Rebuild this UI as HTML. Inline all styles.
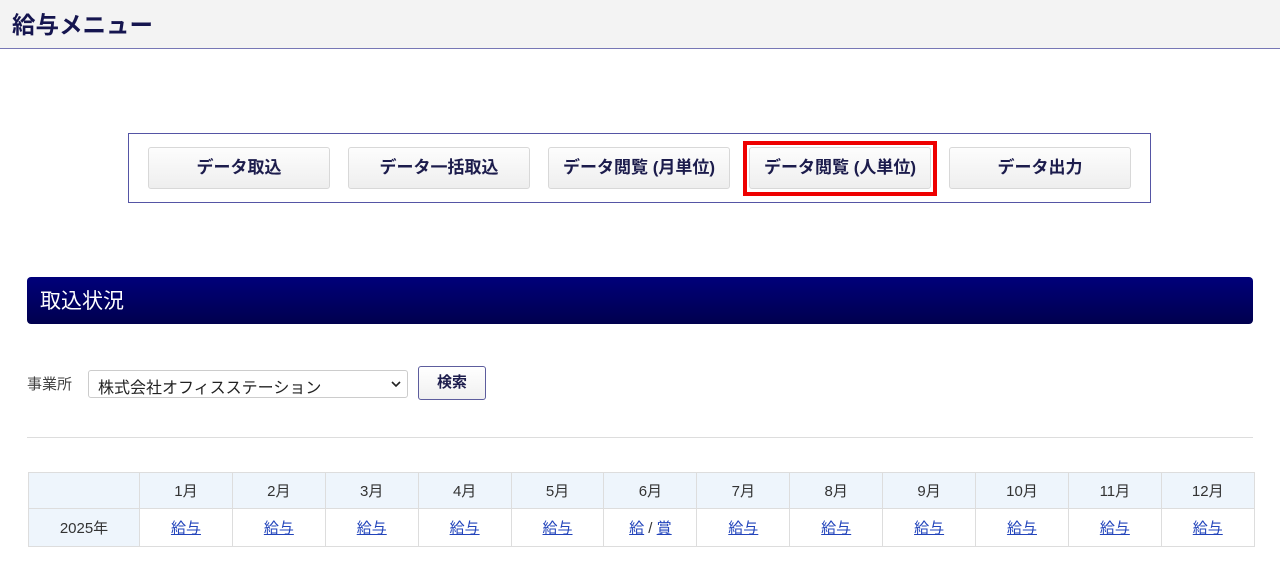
<!DOCTYPE html>
<html><head><meta charset="utf-8"><style>
*{margin:0;padding:0;box-sizing:border-box}
body{width:1280px;height:569px;background:#fff;font-family:"Liberation Sans","Noto Sans CJK JP",sans-serif;position:relative;overflow:hidden;color:#333}
.hd{position:absolute;left:0;top:0;width:1280px;height:49px;background:#f3f3f3;border-bottom:1px solid #7777b5}
.hd h1{position:absolute;left:12px;top:6px;font-size:23.5px;font-weight:bold;color:#15154f;letter-spacing:0}
.box{position:absolute;left:128px;top:133px;width:1023px;height:70px;border:1px solid #5555a5}
.btn{position:absolute;top:147px;width:182px;height:42px;border:1px solid #d8d8d8;border-radius:3px;background:linear-gradient(#fdfdfd,#eeeeee);font-size:17px;font-weight:bold;color:#1c1c4c;text-align:center;line-height:40px}
.red{position:absolute;left:743px;top:141px;width:194px;height:55px;border:4px solid #ee0000}
.ban{position:absolute;left:27px;top:277px;width:1226px;height:47px;border-radius:4px;background:linear-gradient(#00007a,#00004e);color:#fff;font-size:21px;padding:8px 0 0 13px}
.lbl{position:absolute;left:27px;top:373px;font-size:15px;color:#444}
.sel{position:absolute;left:88px;top:370px;width:320px;height:28px;border:1px solid #ccc;border-radius:3px;font-size:16px;color:#222;padding:3px 0 0 9px}
.sel svg{position:absolute;right:6px;top:9px}
.sb{position:absolute;left:418px;top:366px;width:68px;height:34px;border:1px solid #5d5d9d;border-radius:3px;background:linear-gradient(#fff,#f0f0f0);font-size:15px;font-weight:bold;color:#1c1c4c;text-align:center;line-height:32px}
.hr{position:absolute;left:27px;top:437px;width:1226px;height:1px;background:#ddd}
table{position:absolute;left:28px;top:472px;width:1226px;border-collapse:collapse;font-size:15px;table-layout:fixed}
td{border:1px solid #ddd;text-align:center;color:#333}
tr.a td{height:36px;background:#eef5fc}
tr.b td{height:38px}
tr.b td:first-child{background:#eef5fc}
a{color:#2244bb;text-decoration:underline}
</style></head><body>
<div class="hd"><h1>給与メニュー</h1></div>
<div class="box"></div>
<div class="btn" style="left:148px">データ取込</div>
<div class="btn" style="left:348px">データ一括取込</div>
<div class="btn" style="left:548px">データ閲覧 (月単位)</div>
<div class="btn" style="left:749px">データ閲覧 (人単位)</div>
<div class="btn" style="left:949px">データ出力</div>
<div class="red"></div>
<div class="ban">取込状況</div>
<div class="lbl">事業所</div>
<div class="sel">株式会社オフィスステーション<svg width="10" height="8" viewBox="0 0 10 8"><path d="M1 2l4 4 4-4" stroke="#222" stroke-width="1.6" fill="none"/></svg></div>
<div class="sb">検索</div>
<div class="hr"></div>
<table>
<colgroup><col style="width:111px"><col span="12" style="width:92.9px"></colgroup>
<tr class="a"><td></td><td>1月</td><td>2月</td><td>3月</td><td>4月</td><td>5月</td><td>6月</td><td>7月</td><td>8月</td><td>9月</td><td>10月</td><td>11月</td><td>12月</td></tr>
<tr class="b"><td>2025年</td><td><a>給与</a></td><td><a>給与</a></td><td><a>給与</a></td><td><a>給与</a></td><td><a>給与</a></td><td><a>給</a> / <a>賞</a></td><td><a>給与</a></td><td><a>給与</a></td><td><a>給与</a></td><td><a>給与</a></td><td><a>給与</a></td><td><a>給与</a></td></tr>
</table>
</body></html>
